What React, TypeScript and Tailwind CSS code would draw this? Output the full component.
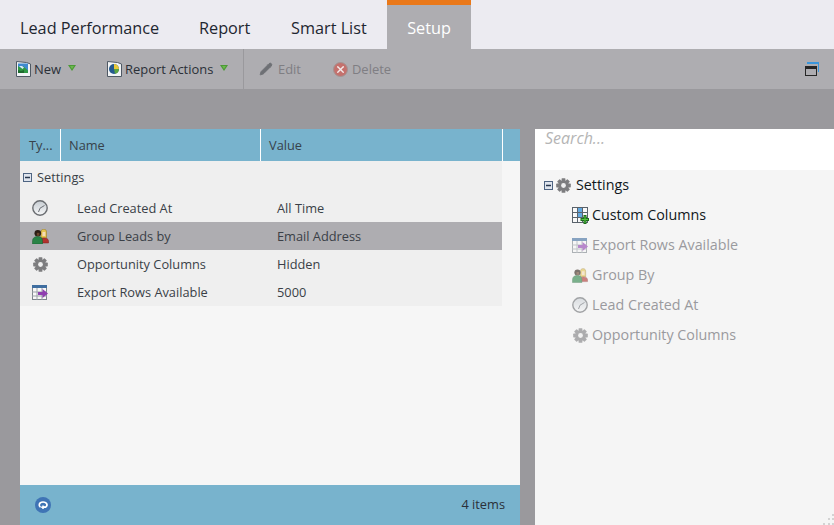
import { Pencil, X } from "lucide-react";

function Caret() {
  return (
    <svg width="8" height="6" viewBox="0 0 8 6" className="ml-[7px] -mt-[3px]">
      <path d="M0 0h8L4 6z" fill="#4b9a35" />
      <path d="M2 1h4L4 4z" fill="#6cb84f" />
    </svg>
  );
}

function NewIcon() {
  return (
    <svg width="15" height="16" viewBox="0 0 15 16">
      <path d="M0.500 0.500l10 1 4 1.500v12.500h-14z" fill="#f2f4f6" stroke="#4f5964" />
      <rect x="2" y="2.500" width="10" height="9.500" fill="#3f8ad0" />
      <path d="M2 5l3 2 2-2 5 4.500V12H2z" fill="#2f9a45" />
      <path d="M3 5h3l2 1.500L6.500 8z" fill="#d9eaf7" />
      <path d="M2 9l3 1 3-1v3H2z" fill="#1d6b2e" />
    </svg>
  );
}

function ReportIcon() {
  return (
    <svg width="15" height="16" viewBox="0 0 15 16">
      <path d="M0.500 0.500l10 1 4 1.500v12.500h-14z" fill="#f2f4f6" stroke="#4f5964" />
      <circle cx="7" cy="8" r="5" fill="#24598f" />
      <path d="M7 8V3a5 5 0 0 1 5 5z" fill="#e8c93a" />
      <path d="M7 8h5a5 5 0 0 1-4 4.800z" fill="#5aa53f" />
    </svg>
  );
}

function WindowIcon() {
  return (
    <svg width="14" height="14" viewBox="0 0 14 14">
      <path d="M2 0h12v10h-1V2H2z" fill="#3a96dc" />
      <rect x="0.500" y="4.500" width="11" height="9" fill="none" stroke="#262626" />
      <rect x="0" y="4" width="12" height="3" fill="#262626" />
    </svg>
  );
}

function Clock() {
  return (
    <svg width="16" height="16" viewBox="0 0 16 16">
      <defs>
        <linearGradient id="clock-face" x1="0" y1="0" x2="0" y2="1">
          <stop offset="0" stopColor="#c6ccd2" />
          <stop offset="1" stopColor="#f6f7f8" />
        </linearGradient>
      </defs>
      <circle cx="8" cy="8" r="7.200" fill="url(#clock-face)" stroke="#6a6d71" strokeWidth="1.400" />
      <path d="M12.500 5.500L8 8.200 6.500 12" fill="none" stroke="#6b7076" strokeWidth="1" />
    </svg>
  );
}

function Gear() {
  return (
    <svg width="15" height="15" viewBox="0 0 15 15">
      <g fill="#7d7d7f">
        <circle cx="7.500" cy="7.500" r="5.300" />
        <rect x="5.600" y="0.200" width="3.800" height="14.600" rx="0.600" />
        <rect x="5.600" y="0.200" width="3.800" height="14.600" rx="0.600" transform="rotate(45 7.500 7.500)" />
        <rect x="5.600" y="0.200" width="3.800" height="14.600" rx="0.600" transform="rotate(90 7.500 7.500)" />
        <rect x="5.600" y="0.200" width="3.800" height="14.600" rx="0.600" transform="rotate(135 7.500 7.500)" />
      </g>
      <circle cx="7.500" cy="7.500" r="2.400" fill="#efefef" />
    </svg>
  );
}

function People() {
  return (
    <svg width="17" height="15" viewBox="0 0 17 15">
      <path d="M9 9V3c0-1.800 1-2.800 2.800-2.800S14.500 1.200 14.500 3v6z" fill="#e6c550" stroke="#9c7d24" strokeWidth="0.600" />
      <rect x="10.500" y="3" width="2.800" height="4" fill="#f5dcb5" />
      <path d="M8 14v-2c0-2 1.500-3 4-3s4.500 1 4.500 3v2z" fill="#b3312c" stroke="#7a1f1c" strokeWidth="0.500" />
      <circle cx="5.800" cy="4.300" r="3.300" fill="#2c1d14" />
      <rect x="4.800" y="3.800" width="2.600" height="3" fill="#6b452c" />
      <path d="M0.500 15v-3c0-3 2-4.500 5.300-4.500s4.700 1.500 4.700 4.500v3z" fill="#2a8346" stroke="#175c2c" strokeWidth="0.500" />
    </svg>
  );
}

function ExportRows() {
  return (
    <svg width="16" height="15" viewBox="0 0 16 15">
      <rect x="0.500" y="0.500" width="14" height="14" fill="#f8f8f8" stroke="#7d858c" />
      <rect x="0" y="0" width="15" height="3" fill="#3f6ea0" />
      <path d="M5 3v12M10 3v12M0 7h15M0 11h15" stroke="#9aa1a8" strokeWidth="1" />
      <path d="M6 7h4.500V4l5.500 4.500-5.500 4.500v-3H6z" fill="#8f3fb0" />
    </svg>
  );
}

function CustomColumns() {
  return (
    <svg width="17" height="17" viewBox="0 0 17 17">
      <rect x="0.500" y="0.500" width="15" height="15" fill="#f8f8f8" stroke="#59626b" />
      <rect x="5" y="1" width="5.500" height="10" fill="#62a8e0" />
      <path d="M5.500 0v16M10.500 0v16M0 5.500h16M0 10.500h16" stroke="#59626b" strokeWidth="1" />
      <path d="M8.500 11h3V8h3v3H17v3h-2.500v3h-3v-3h-3z" fill="#1c6d1c" />
      <path d="M9.500 12h3V9h1v3H16v1h-2.500v3h-1v-3h-3z" fill="#55c63f" />
    </svg>
  );
}

function Expander() {
  return (
    <svg width="9" height="9" viewBox="0 0 9 9">
      <rect x="0.500" y="0.500" width="8" height="8" fill="#dfe5ee" stroke="#4e6482" />
      <rect x="2" y="3.750" width="5" height="1.500" fill="#26364d" />
    </svg>
  );
}

function RefreshBadge() {
  return (
    <svg width="16" height="16" viewBox="0 0 16 16">
      <circle cx="8" cy="8" r="8" fill="#3f74b5" />
      <path d="M5.500 10.200C3.500 9 3.600 5 8 5s5 3.800 2.500 5.200H8" fill="none" stroke="#fff" strokeWidth="1.700" />
      <path d="M6.200 10.200h3.600M8 8.500v3.500" fill="none" stroke="#fff" strokeWidth="1.500" />
    </svg>
  );
}

function ResizeGrip() {
  return (
    <svg width="11" height="11" viewBox="0 0 11 11" className="absolute bottom-0 right-0">
      <g fill="#d3d3d3">
        <rect x="9" y="0" width="2" height="2" />
        <rect x="5" y="4" width="2" height="2" />
        <rect x="9" y="4" width="2" height="2" />
        <rect x="0" y="9" width="2" height="2" />
        <rect x="5" y="9" width="2" height="2" />
        <rect x="9" y="9" width="2" height="2" />
      </g>
    </svg>
  );
}

const rows = [
  { icon: <Clock />, name: "Lead Created At", value: "All Time" },
  { icon: <People />, name: "Group Leads by", value: "Email Address", selected: true },
  { icon: <Gear />, name: "Opportunity Columns", value: "Hidden" },
  { icon: <ExportRows />, name: "Export Rows Available", value: "5000" },
];

const tree = [
  { icon: <ExportRows />, label: "Export Rows Available" },
  { icon: <People />, label: "Group By" },
  { icon: <Clock />, label: "Lead Created At" },
  { icon: <Gear />, label: "Opportunity Columns" },
];

export default function App() {
  return (
    <div className="flex h-[525px] w-[834px] flex-col overflow-hidden bg-[#9a999d] font-['Open_Sans',sans-serif]">
      {/* Tabs */}
      <div className="flex h-[49px] shrink-0 bg-[#ecebf1] text-[16.25px] leading-[22px] text-[#1e2630]">
        <div className="w-[199px] pl-5 pt-[17px]">Lead Performance</div>
        <div className="w-[92px] pt-[17px]">Report</div>
        <div className="w-[96px] pt-[17px]">Smart List</div>
        <div className="h-[49px] w-[84px] border-t-[5px] border-[#ea7819] bg-[#aeadb1] pt-3 text-center text-white">
          Setup
        </div>
      </div>

      {/* Toolbar */}
      <div className="flex h-10 shrink-0 items-center bg-[#aeadb1] text-[12.95px] leading-[18px] text-[#2b3038]">
        <div className="flex h-full w-[244px] items-center border-r border-[#9a999d] pl-4">
          <NewIcon />
          <span className="ml-[3px]">New</span>
          <Caret />
          <span className="ml-[31px]"><ReportIcon /></span>
          <span className="ml-[3px]">Report Actions</span>
          <Caret />
        </div>
        <div className="flex items-center text-[#7f7e83]">
          <Pencil className="ml-[15px] h-[14px] w-[14px]" fill="#6e7075" stroke="#6e7075" strokeWidth={1.5} />
          <span className="ml-[5px]">Edit</span>
          <span className="ml-[32px] flex h-[15px] w-[15px] items-center justify-center rounded-full border border-[#a39494] bg-[#c4716d]">
            <X className="h-[11px] w-[11px] text-[#f3eaea]" strokeWidth={3} />
          </span>
          <span className="ml-[4px]">Delete</span>
        </div>
        <div className="ml-auto mr-[15px] flex">
          <WindowIcon />
        </div>
      </div>

      {/* Content */}
      <div className="flex min-h-0 flex-1 gap-[15px] pl-5 pt-10">
        <div className="flex w-[500px] flex-col bg-[#f6f6f6]">
          <div className="flex h-8 shrink-0 bg-[#78b3cd] text-[12.8px] text-[#37424a]">
            <div className="flex w-[41px] items-center border-r border-white pl-[9px] pt-[2px]">Ty...</div>
            <div className="flex w-[200px] items-center border-r border-white pl-2 pt-[2px]">Name</div>
            <div className="flex w-[242px] items-center border-r border-white pl-2 pt-[2px]">Value</div>
          </div>
          <div className="w-[482px] bg-[#efefef] text-[12.8px] text-[#3a3f47]">
            <div className="flex h-[33px] items-center pl-[3px]">
              <Expander />
              <span className="ml-[5px]">Settings</span>
            </div>
            {rows.map((row) => (
              <div
                key={row.name}
                className={row.selected ? "flex h-7 items-center bg-[#aeadb1]" : "flex h-7 items-center"}
              >
                <div className="flex w-[40px] justify-center">{row.icon}</div>
                <div className="w-[200px] pl-[17px] pt-[2px]">{row.name}</div>
                <div className="pl-[17px] pt-[2px]">{row.value}</div>
              </div>
            ))}
          </div>
          <div className="mt-auto flex h-10 shrink-0 items-center justify-between bg-[#78b3cd] px-[15px] text-[12.8px] text-[#2b3038]">
            <RefreshBadge />
            <span>4 items</span>
          </div>
        </div>

        <div className="relative flex flex-1 flex-col bg-[#f5f5f5]">
          <div className="h-[41px] shrink-0 bg-white pl-[10px] text-[16px] italic leading-[18px] text-[#b5b5b5]">
            Search...
          </div>
          <div className="text-[14.3px] text-[#9a9a9e]">
            <div className="flex h-[30px] items-center pl-[9px] text-[#111820]">
              <Expander />
              <span className="ml-[3px]"><Gear /></span>
              <span className="ml-[5px]">Settings</span>
            </div>
            <div className="flex h-[30px] items-center pl-[37px] text-[#111820]">
              <CustomColumns />
              <span className="ml-[3px]">Custom Columns</span>
            </div>
            {tree.map((item) => (
              <div key={item.label} className="flex h-[30px] items-center pl-[37px]">
                <div className="flex w-4 justify-center opacity-60">{item.icon}</div>
                <span className="ml-1">{item.label}</span>
              </div>
            ))}
          </div>
          <ResizeGrip />
        </div>
      </div>
    </div>
  );
}
